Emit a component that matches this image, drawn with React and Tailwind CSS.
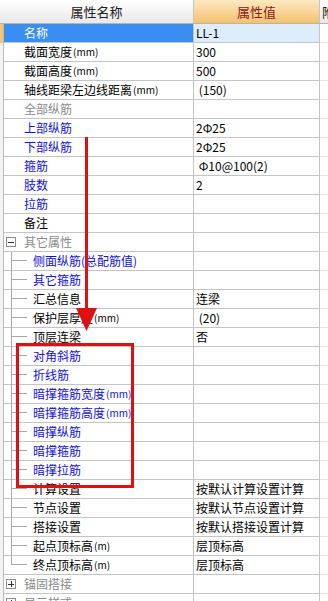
import React from "react";

const BLUE = "text-[#1010e0]";
const GRAY = "text-[#8a8a8a]";
const BLACK = "text-[#000000]";

const Mm = ({ t = "mm" }) => (
  <span className="text-[10px] ml-[1px]">({t})</span>
);

const rows = [
  { name: "名称", c: "sel", v: "LL-1", lv: 0, sel: true },
  { name: <>截面宽度<Mm /></>, c: BLACK, v: "300", lv: 0 },
  { name: <>截面高度<Mm /></>, c: BLACK, v: "500", lv: 0 },
  { name: <>轴线距梁左边线距离<Mm /></>, c: BLACK, v: " (150)", lv: 0 },
  { name: "全部纵筋", c: GRAY, v: "", lv: 0 },
  { name: "上部纵筋", c: BLUE, v: "2Φ25", lv: 0 },
  { name: "下部纵筋", c: BLUE, v: "2Φ25", lv: 0 },
  { name: "箍筋", c: BLUE, v: " Φ10@100(2)", lv: 0 },
  { name: "肢数", c: BLUE, v: "2", lv: 0 },
  { name: "拉筋", c: BLUE, v: "", lv: 0 },
  { name: "备注", c: BLACK, v: "", lv: 0 },
  { name: "其它属性", c: GRAY, v: "", lv: "g", open: true },
  { name: "侧面纵筋(总配筋值)", c: BLUE, v: "", lv: 1 },
  { name: "其它箍筋", c: BLUE, v: "", lv: 1 },
  { name: "汇总信息", c: BLACK, v: "连梁", lv: 1 },
  { name: <>保护层厚度<Mm /></>, c: BLACK, v: " (20)", lv: 1 },
  { name: "顶层连梁", c: BLACK, v: "否", lv: 1 },
  { name: "对角斜筋", c: BLUE, v: "", lv: 1 },
  { name: "折线筋", c: BLUE, v: "", lv: 1 },
  { name: <>暗撑箍筋宽度<Mm /></>, c: BLUE, v: "", lv: 1 },
  { name: <>暗撑箍筋高度<Mm /></>, c: BLUE, v: "", lv: 1 },
  { name: "暗撑纵筋", c: BLUE, v: "", lv: 1 },
  { name: "暗撑箍筋", c: BLUE, v: "", lv: 1 },
  { name: "暗撑拉筋", c: BLUE, v: "", lv: 1 },
  { name: "计算设置", c: BLACK, v: "按默认计算设置计算", lv: 1 },
  { name: "节点设置", c: BLACK, v: "按默认节点设置计算", lv: 1 },
  { name: "搭接设置", c: BLACK, v: "按默认搭接设置计算", lv: 1 },
  { name: <>起点顶标高<Mm t="m" /></>, c: BLACK, v: "层顶标高", lv: 1 },
  { name: <>终点顶标高<Mm t="m" /></>, c: BLACK, v: "层顶标高", lv: 1, last: true },
  { name: "锚固搭接", c: GRAY, v: "", lv: "g", open: false },
  { name: "显示样式", c: GRAY, v: "", lv: "g", open: false },
];

function ExpandBox({ open }) {
  return (
    <span className="w-[10px] h-[10px] border border-[#8c8c8c] bg-white flex items-center justify-center relative shrink-0">
      <span className="w-[6px] h-[1px] bg-[#303030]" />
      {!open && <span className="absolute w-[1px] h-[6px] bg-[#303030]" />}
    </span>
  );
}

function Row({ r }) {
  return (
    <div className="flex h-[19px]">
      <div
        className={`w-[4px] shrink-0 border-r border-[#b8b8b8] ${
          r.sel ? "bg-[#f7c56f]" : "bg-[#f3f3f3]"
        }`}
      />
      <div
        className={`w-[190px] shrink-0 flex border-b border-r border-[#c4c4c4] ${
          r.sel ? "bg-[#3a8ef2]" : "bg-white"
        }`}
      >
        {r.lv === 0 && <span className="w-[20px] shrink-0" />}
        {r.lv === "g" && (
          <span className="w-[20px] shrink-0 flex items-center pl-[2px]">
            <ExpandBox open={r.open} />
          </span>
        )}
        {r.lv === 1 && (
          <span className="w-[26px] shrink-0 flex">
            <span className="w-[7px] shrink-0" />
            <span className="w-[16px] flex flex-col">
              <span className="h-[9px] border-l border-b border-[#a8a8a8]" />
              <span
                className={`flex-1 ${r.last ? "" : "border-l border-[#a8a8a8]"} -mb-[1px]`}
              />
            </span>
          </span>
        )}
        <span
          className={`flex items-center whitespace-nowrap ${
            r.sel ? "text-white" : r.c
          } ${r.lv === 1 ? "pl-[3px]" : ""}`}
        >
          {r.name}
        </span>
      </div>
      <div
        className={`w-[126px] shrink-0 flex items-center pl-[2px] border-b border-r border-[#c4c4c4] whitespace-pre text-black ${
          r.sel ? "bg-[#deedfc]" : "bg-white"
        }`}
      >
        {r.v}
      </div>
      <div className="flex-1 border-b border-[#e4e4e4] bg-white" />
    </div>
  );
}

export default function App() {
  return (
    <div
      className="relative w-[328px] h-[601px] overflow-hidden bg-white text-[12px] leading-none"
      style={{ fontFamily: '"Noto Sans CJK SC", "Noto Sans", sans-serif' }}
    >
      <div className="flex h-[24px] border-b border-[#b4b4b4]">
        <div className="w-[194px] shrink-0 flex items-center justify-center bg-gradient-to-b from-[#ffffff] to-[#e9e9e9] border-r border-[#c4c4c4] text-[13px] text-[#202020]">
          属性名称
        </div>
        <div className="w-[126px] shrink-0 flex items-center justify-center bg-gradient-to-b from-[#fce8c0] to-[#f4c26c] border-r border-[#c4c4c4] text-[13px] text-[#8a1818]">
          属性值
        </div>
        <div className="flex-1 flex items-center pl-[2px] bg-gradient-to-b from-[#ffffff] to-[#e9e9e9] text-[13px] text-[#202020] overflow-hidden whitespace-nowrap">
          附加
        </div>
      </div>
      {rows.map((r, i) => (
        <Row key={i} r={r} />
      ))}

      <svg
        className="absolute left-0 top-0 pointer-events-none"
        width="328"
        height="601"
        viewBox="0 0 328 601"
      >
        <line x1="86.5" y1="137" x2="86.5" y2="312" stroke="#e01010" strokeWidth="3" />
        <polygon points="76,308 97,308 86.5,331" fill="#e01010" />
        <rect
          x="17.5"
          y="344.5"
          width="115"
          height="142"
          fill="none"
          stroke="#e01010"
          strokeWidth="3"
        />
      </svg>
    </div>
  );
}
